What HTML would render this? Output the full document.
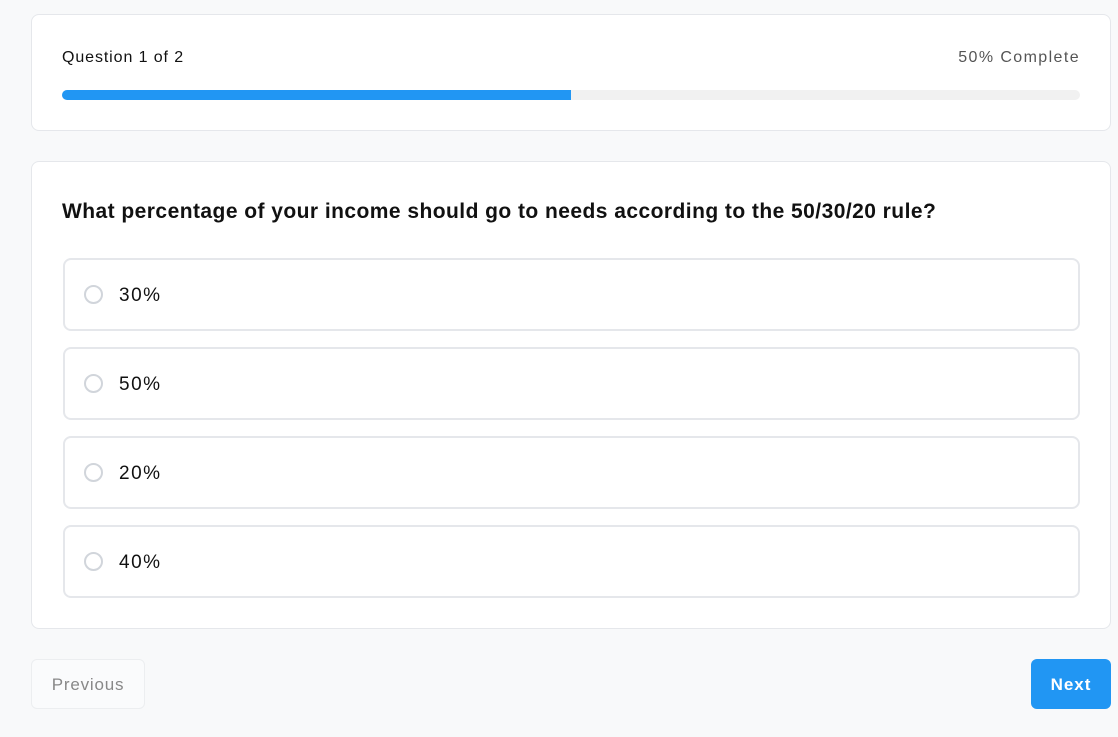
<!DOCTYPE html>
<html><head><style>
*{box-sizing:border-box;margin:0;padding:0}
body{width:1118px;height:737px;background:#f8f9fa;font-family:"Liberation Sans",sans-serif;position:relative;overflow:hidden}
.card{position:absolute;left:31px;width:1080px;background:#fff;border:1px solid #e5e7eb;border-radius:8px}
.opt{position:absolute;left:31px;width:1017px;height:73px;border:2px solid #e5e7eb;border-radius:8px}
.opt .r{position:absolute;left:19px;top:25px;width:19px;height:19px;border:2px solid #d1d5db;border-radius:50%}
.opt span{position:absolute;left:54px;top:25px;font-size:19px;color:#111;letter-spacing:1.5px}
</style></head><body>
<div class="card" style="top:14px;height:117px">
  <div style="position:absolute;left:30px;top:34px;font-size:16px;color:#111;letter-spacing:0.9px">Question 1 of 2</div>
  <div style="position:absolute;right:30px;top:34px;font-size:16px;color:#555;letter-spacing:1.4px">50% Complete</div>
  <div style="position:absolute;left:30px;top:75px;width:1018px;height:10px;background:#f1f1f1;border-radius:5px"><div style="width:509px;height:10px;background:#2196f3;border-radius:5px 0 0 5px"></div></div>
</div>
<div class="card" style="top:161px;height:468px">
  <div style="position:absolute;left:30px;top:38px;font-size:21px;font-weight:bold;color:#111;letter-spacing:0.45px">What percentage of your income should go to needs according to the 50/30/20 rule?</div>
  <div class="opt" style="top:96px"><div class="r"></div><span>30%</span></div>
  <div class="opt" style="top:185px"><div class="r"></div><span>50%</span></div>
  <div class="opt" style="top:274px"><div class="r"></div><span>20%</span></div>
  <div class="opt" style="top:363px"><div class="r"></div><span>40%</span></div>
</div>
<div style="position:absolute;left:31px;top:659px;width:114px;height:50px;border:1px solid #eceef0;border-radius:6px;background:#fafbfc;color:#888;font-size:17px;text-align:center;line-height:50px;letter-spacing:0.8px">Previous</div>
<div style="position:absolute;left:1031px;top:659px;width:80px;height:50px;border-radius:6px;background:#2196f3;color:#fff;font-size:17px;font-weight:bold;text-align:center;line-height:52px;letter-spacing:1px">Next</div>
</body></html>
